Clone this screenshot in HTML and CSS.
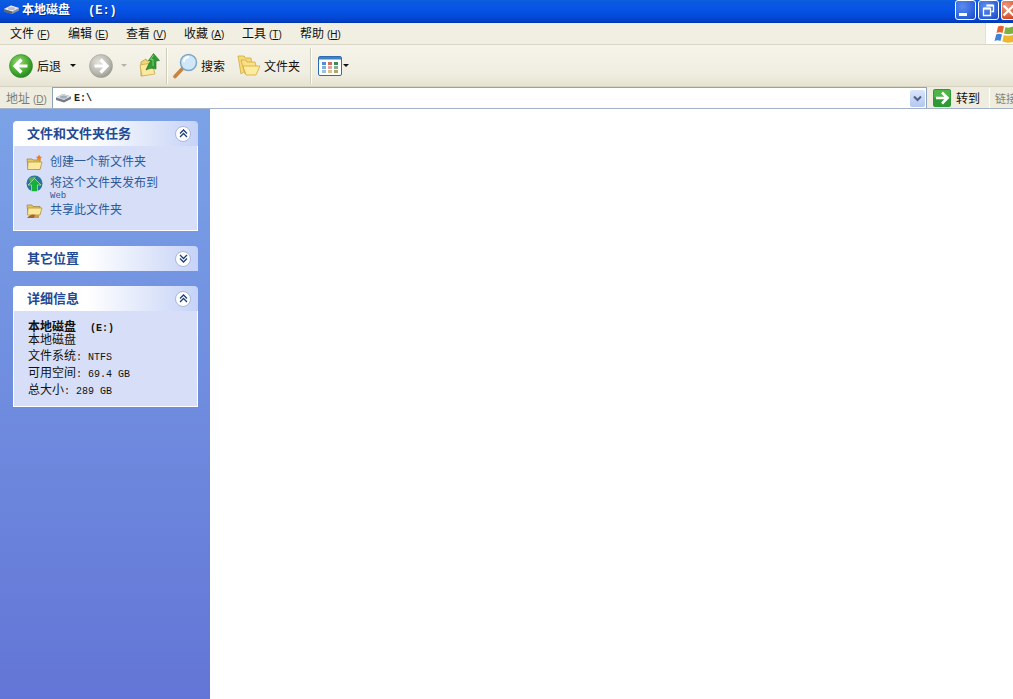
FILE: index.html
```html
<!DOCTYPE html>
<html lang="zh-CN">
<head>
<meta charset="utf-8">
<title>本地磁盘 (E:)</title>
<link rel="stylesheet" href="styles.css">
</head>
<body>
<div class="window">
  <header class="titlebar">
    <svg class="title-icon" width="17" height="11" viewBox="0 0 17 11"><path d="M1 5 8 1.5l8 2.5v2.500L9 10 1 7.500Z" fill="#8d97a8"/><path d="M1 5 8 1.500 16 4 9 7.500Z" fill="#e8ecf2"/><ellipse cx="8.500" cy="4.500" rx="3.500" ry="1.500" fill="#b5becb"/><path d="M1 5.200 9 7.500V10L1 7.500Z" fill="#5d6675"/></svg>
    <span class="title-text">本地磁盘<span class="title-drive">(E:)</span></span>
    <div class="win-buttons">
      <div class="win-btn"><span class="min-glyph"></span></div>
      <div class="win-btn"><svg width="13" height="13" viewBox="0 0 13 13"><path d="M4.500 1.500h7v6h-2M1.500 4.500h7v7h-7Z" fill="none" stroke="#fff" stroke-width="1.300"/><path d="M1.500 4.500h7M4.500 1.500h7" stroke="#fff" stroke-width="2"/></svg></div>
      <div class="win-btn close"><svg width="13" height="13" viewBox="0 0 13 13"><path d="M1.500 1.500 11.500 11.500M11.500 1.500 1.500 11.500" stroke="#fff" stroke-width="2.400"/></svg></div>
    </div>
  </header>

  <nav class="menubar">
    <span class="menu-item">文件<span class="key">(<u>F</u>)</span></span>
    <span class="menu-item">编辑<span class="key">(<u>E</u>)</span></span>
    <span class="menu-item">查看<span class="key">(<u>V</u>)</span></span>
    <span class="menu-item">收藏<span class="key">(<u>A</u>)</span></span>
    <span class="menu-item">工具<span class="key">(<u>T</u>)</span></span>
    <span class="menu-item">帮助<span class="key">(<u>H</u>)</span></span>
    <div class="logo-box">
      <svg width="19" height="20" viewBox="0 0 19 20"><path d="M4 2.500Q7 1 10 2.500L8.500 9Q5.500 7.500 2.500 9Z" fill="#e8642c"/><path d="M11.500 3Q14.500 4.500 19 2.500V9.500Q14 11 10 9.500Z" fill="#7fb23c"/><path d="M2.200 10.500Q5 9 8 10.500L6.500 17Q3.500 15.500 .5 17Z" fill="#3e83d6"/><path d="M9.800 11Q14 12.500 19 11V18Q13 19.500 8.300 17.500Z" fill="#efb72e"/></svg>
    </div>
  </nav>

  <div class="toolbar">
    <svg class="back-icon" width="24" height="24" viewBox="0 0 24 24"><defs><radialGradient id="greenBall" cx=".4" cy=".35" r=".75"><stop offset="0" stop-color="#9bdc6e"/><stop offset=".6" stop-color="#43a82f"/><stop offset="1" stop-color="#1d7a1c"/></radialGradient></defs><circle cx="12" cy="12" r="11.500" fill="url(#greenBall)" stroke="#2d8a2a" stroke-width=".6"/><path d="M12.500 5.500 6 12l6.500 6.500M6.500 12H18.500" fill="none" stroke="#fff" stroke-width="3.200"/></svg>
    <span class="tool-label back-label">后退</span>
    <span class="caret back-caret"></span>
    <svg class="forward-icon" width="24" height="24" viewBox="0 0 24 24"><defs><radialGradient id="grayBall" cx=".4" cy=".35" r=".75"><stop offset="0" stop-color="#e4e4dc"/><stop offset=".65" stop-color="#b5b5ac"/><stop offset="1" stop-color="#8f8f88"/></radialGradient></defs><circle cx="12" cy="12" r="11.500" fill="url(#grayBall)" stroke="#a0a098" stroke-width=".6"/><path d="M11.500 5.500 18 12l-6.500 6.500M17.500 12H5.500" fill="none" stroke="#fff" stroke-width="3.200"/></svg>
    <span class="caret forward-caret"></span>
    <svg class="up-icon" width="21" height="24" viewBox="0 0 21 24"><path d="M2 9l5-3 1 2 5-1 2 13L2 23Z" fill="#f0d679" stroke="#b99a3c" stroke-width=".8"/><path d="M1 12l12-2 3 11-13 2Z" fill="#fbe89c" stroke="#c2a345" stroke-width=".7"/><path d="M7 17C9 12 10.500 9 12 8L9.500 7.500 14.500 .5 20.500 7.500 17 8V16C14 15 11 15 7 17Z" fill="#2f9a34" stroke="#1c7122" stroke-width=".6"/><path d="M14.500 2 11.500 6.500H14V13" fill="none" stroke="#7fcf6e" stroke-width="1"/></svg>
    <span class="tool-sep up-sep"></span>
    <svg class="search-icon" width="25" height="26" viewBox="0 0 25 26"><path d="M2 23.500 9.500 15.500" stroke="#c9833f" stroke-width="3.600" stroke-linecap="round"/><circle cx="15.500" cy="9.500" r="8" fill="#cfe7f7" stroke="#7fa6c4" stroke-width="1.500"/><path d="M11 9a5 5 0 0 1 5-5" fill="none" stroke="#fff" stroke-width="2"/></svg>
    <span class="tool-label search-label">搜索</span>
    <svg class="folders-icon" width="23" height="21" viewBox="0 0 23 21"><path d="M1 1h6l1.500 2H14l1 8-11 8Z" fill="#f8d97a" stroke="#d0a93f" stroke-width=".8"/><path d="M4 5h5l1 2h8l1 4-11 8Z" fill="#fbe08a" stroke="#d0a93f" stroke-width=".8"/><path d="M6 11h17l-4 9H9Z" fill="#fdeb9f" stroke="#d4ab3c" stroke-width=".8"/></svg>
    <span class="tool-label folders-label">文件夹</span>
    <span class="tool-sep folders-sep"></span>
    <svg class="views-icon" width="24" height="20" viewBox="0 0 24 20"><rect x=".5" y=".5" width="23" height="19" rx="1.500" fill="#fff" stroke="#2d6cae"/><rect x="1" y="1" width="22" height="2.500" fill="#3f83c4"/><g><rect x="4" y="6" width="4" height="3" fill="#4d8fd0"/><rect x="10" y="6" width="4" height="3" fill="#d06c5a"/><rect x="16" y="6" width="4" height="3" fill="#3f8a5a"/><rect x="4" y="10" width="4" height="3" fill="#7fb0dc"/><rect x="10" y="10" width="4" height="3" fill="#d9a6a0"/><rect x="16" y="10" width="4" height="3" fill="#86ad8f"/><rect x="4" y="14" width="4" height="3" fill="#9cc0e2"/><rect x="10" y="14" width="4" height="3" fill="#d8c28a"/><rect x="16" y="14" width="4" height="3" fill="#b0a868"/></g></svg>
    <span class="caret views-caret"></span>
  </div>

  <div class="addressbar">
    <span class="addr-label">地址<span class="key">(<u>D</u>)</span></span>
    <div class="addr-input">
      <svg class="drive-icon" width="17" height="10" viewBox="0 0 17 10"><path d="M1 4.500 8 1l8 2.500V6L9 9.500 1 7Z" fill="#747c8a"/><path d="M1 4.500 8 1l8 2.500L9 7Z" fill="#d8dde4"/><ellipse cx="8.500" cy="4" rx="3.500" ry="1.500" fill="#a5adba"/></svg>
      <span class="addr-text">E:\</span>
      <div class="addr-drop"><svg width="9" height="7" viewBox="0 0 9 7"><path d="M1 1.500 4.500 5 8 1.500" fill="none" stroke="#4d6185" stroke-width="2"/></svg></div>
    </div>
    <svg class="go-icon" width="18" height="18" viewBox="0 0 18 18"><rect width="18" height="18" rx="2" fill="#2f9a34"/><rect x="1" y="1" width="16" height="8" rx="1" fill="#4db548"/><path d="M9 3.500 14.500 9 9 14.500M14 9H3" fill="none" stroke="#fff" stroke-width="2.600"/></svg>
    <span class="go-label">转到</span>
    <span class="links">链接</span>
  </div>

  <main class="main">
    <aside class="sidebar">
      <section class="panel">
        <div class="panel-head"><h2>文件和文件夹任务</h2><span class="chev"><svg width="9" height="9" viewBox="0 0 9 9"><path d="M1 4.500 4.500 1 8 4.500M1 8 4.500 4.500 8 8" fill="none" stroke="#1f3d7a" stroke-width="1.300"/></svg></span></div>
        <div class="panel-body tasks">
          <div class="task">
            <svg width="17" height="17" viewBox="0 0 17 17"><path d="M1 5h5l1 1h7v9H2Z" fill="#e7c75f" stroke="#9b7f2c" stroke-width=".7"/><path d="M2 8h14l-2 7.500H1.500Z" fill="#fbe89a" stroke="#a98a35" stroke-width=".7"/><path d="M13 .5l1 2 2 .5-1.500 1.500.5 2-2-1-2 1 .5-2L10 3l2-.5Z" fill="#ee7b22"/></svg>
            <span>创建一个新文件夹</span>
          </div>
          <div class="task task-web">
            <svg width="17" height="17" viewBox="0 0 17 17"><circle cx="8.500" cy="8.500" r="8" fill="#2a7598"/><path d="M3 3.500Q7 1 10 2L8.500 5 4 7Z" fill="#59ad5c"/><path d="M8.500 3.500 15 10h-3.500v6.500h-6V10H2Z" fill="#17b03a" stroke="#d6f5c8" stroke-width=".6"/></svg>
            <span class="task-lines">将这个文件夹发布到<span class="web-word">Web</span></span>
          </div>
          <div class="task">
            <svg width="17" height="17" viewBox="0 0 17 17"><path d="M1 3h5l1 1.500h7V12H2Z" fill="#e7c75f" stroke="#9b7f2c" stroke-width=".7"/><path d="M2 6h14l-2 7H1.500Z" fill="#fbe89a" stroke="#a98a35" stroke-width=".7"/><path d="M1 16q4-5 9-3l-2 3Z" fill="#a8662a"/><path d="M9 13h4v3H8Z" fill="#d39a4a"/></svg>
            <span>共享此文件夹</span>
          </div>
        </div>
      </section>

      <section class="panel">
        <div class="panel-head"><h2>其它位置</h2><span class="chev"><svg width="9" height="9" viewBox="0 0 9 9"><path d="M1 1 4.500 4.500 8 1M1 4.500 4.500 8 8 4.500" fill="none" stroke="#1f3d7a" stroke-width="1.300"/></svg></span></div>
      </section>

      <section class="panel">
        <div class="panel-head"><h2>详细信息</h2><span class="chev"><svg width="9" height="9" viewBox="0 0 9 9"><path d="M1 4.500 4.500 1 8 4.500M1 8 4.500 4.500 8 8" fill="none" stroke="#1f3d7a" stroke-width="1.300"/></svg></span></div>
        <div class="panel-body details">
          <div class="detail-name">本地磁盘<span class="detail-drive">(E:)</span></div>
          <div class="detail-type">本地磁盘</div>
          <div class="detail-row">文件系统<span class="latin">: NTFS</span></div>
          <div class="detail-row">可用空间<span class="latin">: 69.4 GB</span></div>
          <div class="detail-row">总大小<span class="latin">: 289 GB</span></div>
        </div>
      </section>
    </aside>
    <div class="content"></div>
  </main>
</div>
</body>
</html>
```

FILE: styles.css
```css
* { box-sizing: border-box; }
html, body { margin: 0; padding: 0; height: 100%; overflow: hidden; }
body { font-family: "Noto Sans CJK SC", "Liberation Sans", sans-serif; font-size: 12px; color: #000; background: #fff; }
u { text-decoration: underline; }
.window { width: 1013px; height: 699px; display: flex; flex-direction: column; overflow: hidden; }

.titlebar { height: 23px; flex: none; display: flex; align-items: center; padding-left: 3px; color: #fff;
  background: linear-gradient(#0a5fe0 0, #0a58de 3px, #0755e6 8px, #0449d8 17px, #0240c4 21px, #0236a8 23px); }
.title-icon { flex: none; margin-top: -4px; }
.title-text { margin-left: 2px; font-size: 12px; font-weight: 700; line-height: 18px; margin-top: -3px; text-shadow: 1px 1px 0 #0a2f8c; white-space: nowrap; }
.title-drive { margin-left: 18px; font-family: "Liberation Mono", monospace; }
.win-buttons { margin-left: auto; display: flex; gap: 2px; flex: none; width: 58px; margin-top: -3px; height: 20px; }
.win-btn { width: 21px; height: 20px; flex: none; border: 1px solid #fff; border-radius: 3px; display: flex; align-items: center; justify-content: center;
  background: radial-gradient(circle at 35% 30%, #5b8df0, #2a5fd8 70%, #1d46b8); }
.min-glyph { width: 8px; height: 3px; background: #fff; margin-top: 8px; margin-right: 5px; }
.win-btn.close { background: radial-gradient(circle at 35% 30%, #ec9a80, #dc5a32 70%, #bd3a16); border-right: 0; border-radius: 3px 0 0 3px; width: 14px; justify-content: flex-start; }

.menubar { height: 22px; flex: none; display: flex; align-items: center; padding-left: 10px; background: #f1efe2; border-bottom: 1px solid #d8d5c5; font-size: 12px; color: #111; }
.menu-item { width: 58px; white-space: nowrap; line-height: 14px; }
.key { margin-left: 3px; font-family: "Liberation Sans", sans-serif; font-size: 10px; }
.logo-box { margin-left: auto; width: 28px; height: 21px; background: #fff; flex: none; display: flex; align-items: center; justify-content: flex-end; border-left: 1px solid #e4e2d4; }

.toolbar { height: 42px; flex: none; display: flex; align-items: center; padding-left: 9px; background: linear-gradient(#f6f4ea, #f0eee1 70%, #e6e3d2); border-bottom: 1px solid #d6d3c2; }
.tool-label { font-size: 12px; line-height: 14px; color: #111; white-space: nowrap; }
.back-icon, .forward-icon { flex: none; }
.back-label { margin-left: 4px; }
.caret { flex: none; width: 0; height: 0; border-left: 3px solid transparent; border-right: 3px solid transparent; border-top: 3px solid #111; }
.back-caret { margin-left: 9px; }
.forward-icon { margin-left: 13px; }
.forward-caret { margin-left: 8px; border-top-color: #b5b3a8; }
.up-icon { margin-left: 12px; flex: none; margin-top: -1px; }
.tool-sep { width: 1px; height: 36px; background: #cfccba; border-right: 1px solid #fff; flex: none; box-sizing: content-box; }
.up-sep { margin-left: 6px; }
.search-icon { margin-left: 5px; flex: none; }
.search-label { margin-left: 3px; }
.folders-icon { margin-left: 12px; flex: none; }
.folders-label { margin-left: 4px; }
.folders-sep { margin-left: 10px; }
.views-icon { margin-left: 6px; flex: none; }
.views-caret { margin-left: 1px; }

.addressbar { height: 22px; flex: none; display: flex; align-items: center; padding-left: 6px; background: #efede0; border-bottom: 1px solid #a3b2c8; }
.addr-label { width: 46px; flex: none; font-size: 12px; color: #7f7c6f; white-space: nowrap; }
.addr-input { width: 875px; height: 21px; flex: none; background: #fff; border: 1px solid #8ba4bd; border-bottom: 0; display: flex; align-items: center; padding-left: 2px; }
.drive-icon { flex: none; }
.addr-text { margin-left: 2px; font-family: "Liberation Mono", monospace; font-size: 10px; font-weight: 700; color: #222; }
.addr-drop { margin-left: auto; width: 15px; height: 17px; margin-right: 1px; background: linear-gradient(#dbe5fb, #b4c7f2); border-radius: 2px; display: flex; align-items: center; justify-content: center; }
.go-icon { margin-left: 6px; flex: none; }
.go-label { margin-left: 5px; font-size: 12px; color: #111; white-space: nowrap; }
.links { margin-left: 9px; padding-left: 5px; border-left: 1px solid #fff; font-size: 11px; color: #85837a; height: 20px; line-height: 20px; white-space: nowrap; width: 30px; flex: none; }

.main { flex: 1; display: flex; min-height: 0; }
.sidebar { width: 210px; flex: none; padding: 12px 12px 0 13px; display: flex; flex-direction: column; gap: 15px; background: linear-gradient(#7ba2e7, #6375d6); }
.content { flex: 1; background: #fff; }

.panel-head { height: 25px; display: flex; align-items: center; justify-content: space-between; padding: 0 7px 0 14px; border-radius: 4px 4px 0 0; background: linear-gradient(90deg, #fff 0, #fff 40%, #c6d3f7 100%); }
.panel-head h2 { margin: 0 0 2px; font-size: 13px; font-weight: 700; color: #1f4a94; line-height: 14px; }
.chev { width: 16px; height: 16px; flex: none; border-radius: 50%; background: #fff; border: 1px solid #a8b8dc; display: flex; align-items: center; justify-content: center; }
.panel-body { background: #d6dff7; border: 1px solid #fff; border-top: 0; }

.tasks { height: 85px; padding: 6px 0 0 12px; display: flex; flex-direction: column; }
.task { display: flex; align-items: flex-start; gap: 7px; height: 17px; font-size: 12px; line-height: 17px; color: #2b5a9c; }
.task svg { flex: none; margin-top: 2px; }
.task-web { margin-top: 4px; height: 27px; }
.task-web svg { margin-top: 2px; }
.web-word { display: block; height: 9px; margin-top: 2px; font-family: "Liberation Mono", monospace; font-size: 9px; line-height: 9px; }

.details { height: 96px; padding: 8px 0 0 14px; font-size: 12px; color: #111; }
.detail-name { height: 14px; font-weight: 700; line-height: 14px; white-space: nowrap; }
.detail-drive { margin-left: 14px; font-family: "Liberation Mono", monospace; font-size: 10px; }
.detail-type { height: 12px; line-height: 12px; }
.detail-row { height: 17px; line-height: 17px; white-space: pre; }
.detail-type + .detail-row { margin-top: 1px; }
.latin { font-family: "Liberation Mono", monospace; font-size: 10px; }
```
